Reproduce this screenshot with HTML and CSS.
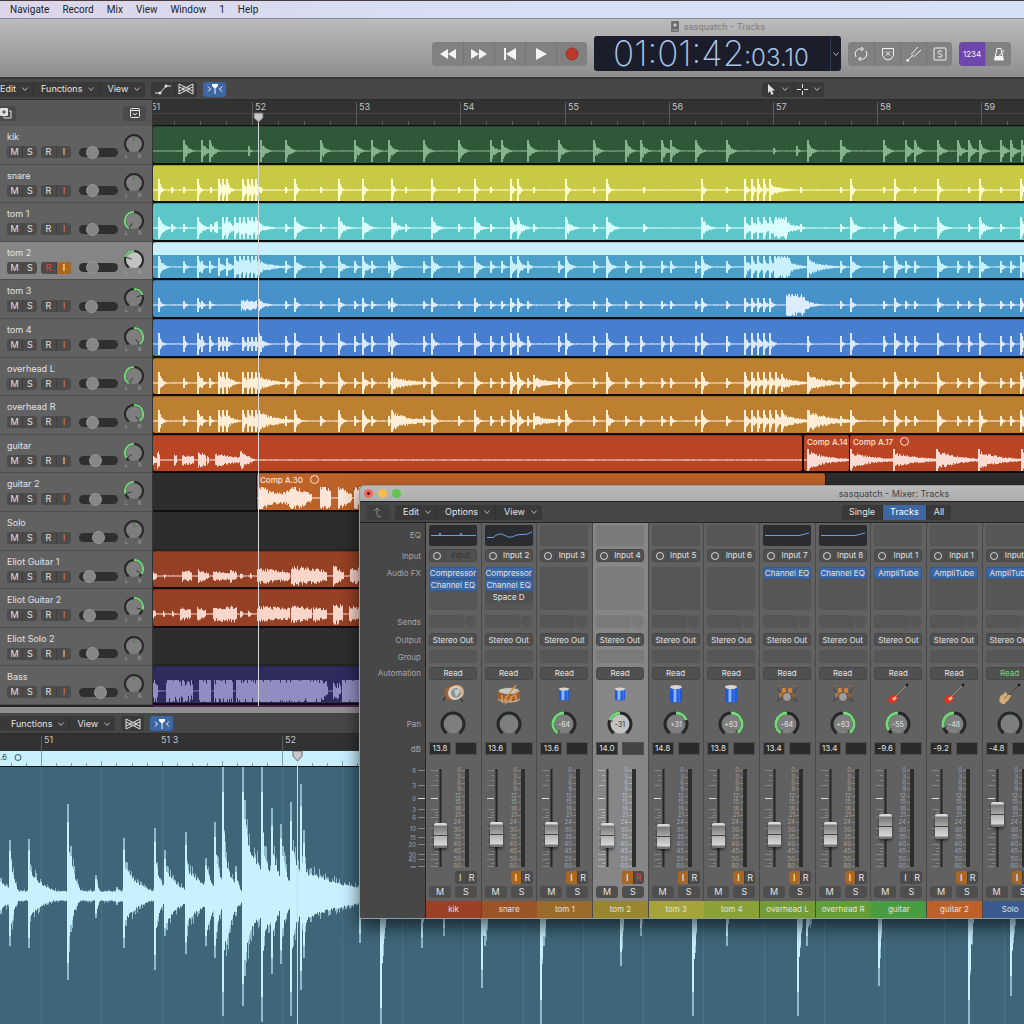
FILE: index.html
```html
<!DOCTYPE html>
<html lang="en">
  <head>
    <meta charset="UTF-8" />
    <meta name="viewport" content="width=device-width, initial-scale=1">
    <title>sasquatch - Tracks</title>
    <link rel="stylesheet" href="styles.css">
  </head>
  <body>
    <svg class="symbols" aria-hidden="true">
      <symbol id="chevron" viewBox="0 0 8 6"><path d="M1.5 1.5 4 4.5 6.500 1.500" /></symbol>
      <symbol id="automation" viewBox="0 0 18 12"><path d="M1 10h5l6-7h5" /><circle class="dot" cx="6" cy="10" r="1.500" /><circle class="dot" cx="12" cy="3" r="1.500" /></symbol>
      <symbol id="flex" viewBox="0 0 18 12"><path d="M2 1v10l7-3.500L16 11V1L9 4.500zM2 4l5 2-5 2M16 4l-5 2 5 2" /><path d="M7 4v4M9 5v2M11 4v4" /></symbol>
      <symbol id="catch" viewBox="0 0 18 12"><path d="M2 3.500 4.500 6 2 8.500M16 3.500 13.500 6l2.500 2.500M9 3v8" /><path class="dot" d="M6 1h6v2l-2 2H8L6 3z" /></symbol>
      <symbol id="kick" viewBox="0 0 26 22"><path d="M6 13l-3 5M19 14l4 5" stroke="#222" /><circle cx="12" cy="10" r="7.500" fill="#a8622f" /><circle cx="17" cy="9" r="7" fill="#e0aa78" /><circle cx="15" cy="10" r="7" fill="#d2d0c8" /><circle cx="16" cy="10" r="5" fill="#8b9092" /><path d="M14 7l5-1 1 3-4 5z" fill="#c3c8c8" /></symbol>
      <symbol id="snare" viewBox="0 0 26 22"><path d="M2 8v8c2 4 20 4 22 0V8z" fill="#a85d25" /><path d="M2 16c2 4 20 4 22 0" fill="none" stroke="#c9c5bc" /><ellipse cx="13" cy="8" rx="11" ry="3.500" fill="#cbc7bf" stroke="#6b6560" /><path d="M6 12v6M10 13v6M15 13v6M20 12v6" stroke="#c9c5bc" /><path d="M6 20 20 2M9 21 22 8" stroke="#d09340" stroke-width="1.500" /></symbol>
      <symbol id="tom" viewBox="0 0 26 22"><path d="M8 6v10c1 2 9 2 10 0V6z" fill="#2059d5" /><path d="M12 7v10" stroke="#86b5ff" stroke-width="3" /><path d="M16 7v10" stroke="#4f86e8" /><ellipse cx="13" cy="6" rx="5" ry="1.500" fill="#d9d5c8" /></symbol>
      <symbol id="bigtom" viewBox="0 0 26 22"><path d="M7 4v14c1 2 11 2 12 0V4z" fill="#2059d5" /><path d="M12 5v14" stroke="#86b5ff" stroke-width="3" /><path d="M16 5v14" stroke="#4f86e8" /><ellipse cx="13" cy="4" rx="6" ry="2" fill="#d9d5c8" /></symbol>
      <symbol id="kit" viewBox="0 0 26 22"><path d="M3 19 6 10 3 4M23 19l-3-9 3-6M8 14l-3 5M18 14l3 5" fill="none" stroke="#3c3733" stroke-width=".700" /><path d="M3 4l6-2M17 2l6 2" stroke="#8b6d42" /><rect x="8" y="5" width="4" height="5" rx="1" fill="#cf8136" /><rect x="14" y="5" width="4" height="5" rx="1" fill="#cf8136" /><rect x="5" y="10" width="4" height="4" rx="1" fill="#bd7230" /><rect x="18" y="10" width="4" height="4" rx="1" fill="#8d5d35" /><circle cx="13" cy="14" r="4.500" fill="#9c9d9f" stroke="#5d4a3b" /></symbol>
      <symbol id="redguitar" viewBox="0 0 26 22"><path d="M11 13 22 2" stroke="#a98971" /><path d="M21 3l2-2" stroke="#191513" stroke-width="2" /><path d="M4 15c1-3 3-1 5-4 0 1 1 2 3 2 0 2-1 2 0 4-1 3-3 1-4 3-4 1-6-2-4-5z" fill="#d8371e" /><path d="M7 16l3-3 2 2-3 3z" fill="#f0ab8f" /></symbol>
      <symbol id="woodguitar" viewBox="0 0 26 22"><path d="M11 13 22 2" stroke="#4d3a2c" /><path d="M21 3l2-2" stroke="#191513" stroke-width="2" /><path d="M3 14c1-3 4-1 5-6 1 2 2 4 4 4 3-1 2 2 0 4-1 3-3 2-4 5-4 1-7-3-5-7z" fill="#d3ac79" /><path d="M7 16l4-4" stroke="#8d6d4c" /></symbol>
    </svg>

    <nav class="menu-bar">
      <button>Navigate</button>
      <button>Record</button>
      <button>Mix</button>
      <button>View</button>
      <button>Window</button>
      <button>1</button>
      <button>Help</button>
    </nav>

    <header class="control-bar">
      <h1 class="window-title">
        <svg width="8" height="11" viewBox="0 0 8 11"><rect width="8" height="11" rx="1" fill="#666" /><circle cx="4" cy="4" r="2" fill="#c5ced2" /><path d="M1 9h6" stroke="#aaa" /></svg>
        sasquatch - Tracks
      </h1>
      <div class="controls">
        <div class="button-group transport">
          <button aria-label="Rewind"><svg width="16" height="12" viewBox="0 0 16 12"><path class="solid" d="M8 1v10L0 6zM16 1v10L8 6z" /></svg></button>
          <button aria-label="Forward"><svg width="16" height="12" viewBox="0 0 16 12"><path class="solid" d="M0 1v10l8-5zM8 1v10l8-5z" /></svg></button>
          <button aria-label="Go to beginning"><svg width="14" height="12" viewBox="0 0 14 12"><path class="solid" d="M1 0h2v12H1zM13 0v12L3 6z" /></svg></button>
          <button aria-label="Play"><svg width="12" height="12" viewBox="0 0 12 12"><path class="solid" d="M1 0v12l11-6z" /></svg></button>
          <button aria-label="Record"><svg width="14" height="14" viewBox="0 0 14 14"><circle cx="7" cy="7" r="6" fill="#bd3a2b" stroke="#913329" /></svg></button>
        </div>
        <div class="lcd">
          <div class="lcd-time">01:01:42<span>:03.10</span></div>
          <button aria-label="Display mode"><svg class="chevron"><use href="#chevron" /></svg></button>
        </div>
        <div class="button-group modes">
          <button aria-label="Cycle"><svg width="16" height="16" viewBox="0 0 16 16"><path d="M3 11Q1 8 3 5T8 3h2M8 1l2.500 2L8 5M13 5q2 3 0 6T8 13H6M8 11l-2.500 2L8 15" /></svg></button>
          <button aria-label="Replace"><svg width="14" height="14" viewBox="0 0 14 14"><path d="M1.500 1.500h11v7L10 12q-3 2-6 0L1.500 8.500zM5 4.500l4 4M9 4.500l-4 4" /></svg></button>
          <button aria-label="Tuner"><svg width="16" height="16" viewBox="0 0 16 16"><path d="M1 15l5-5M12 1 6 7.500C5 9 7 11 8.500 10L15 4" /><circle cx="1.500" cy="14.500" r="1" /></svg></button>
          <button aria-label="Solo"><svg width="14" height="14" viewBox="0 0 14 14"><rect x="1" y="1" width="12" height="12" rx="1" /><path d="M9 5Q8.500 3.800 7 3.800 5 3.800 5 5.300 5 6.500 7 7q2 .500 2 1.700 0 1.500-2 1.500T5 9" /></svg></button>
        </div>
        <div class="button-group modes">
          <button class="count-in">1234</button>
          <button aria-label="Metronome"><svg width="12" height="14" viewBox="0 0 12 14"><path d="M4 1.500h4L10.500 13h-9zM5.500 10 11 3" /><path class="solid" d="M2.500 9h7l1 4h-9z" /></svg></button>
        </div>
      </div>
    </header>

    <main class="workspace">
      <section class="arrange">
        <div class="tool-bar">
          <div class="menus">
            <button>Edit <svg class="chevron"><use href="#chevron" /></svg></button>
            <button>Functions <svg class="chevron"><use href="#chevron" /></svg></button>
            <button>View <svg class="chevron"><use href="#chevron" /></svg></button>
          </div>
          <div class="menus icons">
            <button aria-label="Automation"><svg><use href="#automation" /></svg></button>
            <button aria-label="Flex"><svg><use href="#flex" /></svg></button>
          </div>
          <div class="menus icons">
            <button class="active" aria-label="Catch playhead"><svg><use href="#catch" /></svg></button>
          </div>
          <div class="menus tools">
            <button aria-label="Pointer tool"><svg width="9" height="11" viewBox="0 0 9 11"><path class="solid" d="M1 0v9l2-2 1.500 4 2-1L5 6.500h3z" /></svg><svg class="chevron"><use href="#chevron" /></svg></button>
            <button aria-label="Marquee tool"><svg width="11" height="11" viewBox="0 0 11 11"><path d="M5.500 0v4M5.500 7v4M0 5.500h4M7 5.500h4" /></svg><svg class="chevron"><use href="#chevron" /></svg></button>
          </div>
        </div>

        <div class="timeline">
          <div class="track-tools">
            <button aria-label="Duplicate track"><svg width="12" height="12" viewBox="0 0 12 12"><rect class="solid" x="0" y="1" width="8" height="8" rx="1" /><path class="cut" d="M4 3v4M2 5h4" /><path d="M9 4h2v7H4V9.500" /></svg></button>
            <button aria-label="Track options"><svg width="12" height="12" viewBox="0 0 12 12"><rect x="1.500" y="1.500" width="9" height="9" rx="1" /><path d="M1.500 3.500h9M4 6l2 2 2-2" /></svg></button>
          </div>
          <svg class="ruler" id="ruler"></svg>
          <div class="track-list" id="trackList"></div>
          <div class="lanes" id="lanes"></div>
        </div>
        <svg class="playhead"><path class="line" d="M5.500 8v590" /><path class="head" d="M1 1h9v5L5.500 10 1 6z" /></svg>
      </section>

      <section class="editor">
        <div class="tool-bar">
          <div class="menus">
            <button>Functions <svg class="chevron"><use href="#chevron" /></svg></button>
            <button>View <svg class="chevron"><use href="#chevron" /></svg></button>
          </div>
          <div class="menus icons">
            <button aria-label="Flex"><svg><use href="#flex" /></svg></button>
          </div>
          <div class="menus icons">
            <button class="active" aria-label="Catch playhead"><svg><use href="#catch" /></svg></button>
          </div>
        </div>
        <svg class="editor-ruler" id="editorRuler"></svg>
        <svg class="editor-wave" id="editorWave"></svg>
        <svg class="playhead"><path class="line" d="M5.500 8v270" /><path class="head" d="M1 0h9v5L5.500 10 1 5z" /></svg>
      </section>
    </main>

    <section class="mixer">
      <div class="mixer-title">
        <span class="light red"></span><span class="light yellow"></span><span class="light green"></span>
        <h2>sasquatch - Mixer: Tracks</h2>
      </div>
      <div class="mixer-bar">
        <button class="back" aria-label="Back"><svg width="10" height="11" viewBox="0 0 10 11"><path d="M1 4l3-3 3 3M4 1v6q0 3 4 3" /></svg></button>
        <div class="menus">
          <button>Edit <svg class="chevron"><use href="#chevron" /></svg></button>
          <button>Options <svg class="chevron"><use href="#chevron" /></svg></button>
          <button>View <svg class="chevron"><use href="#chevron" /></svg></button>
        </div>
        <div class="menus filter">
          <button>Single</button>
          <button class="active">Tracks</button>
          <button>All</button>
        </div>
      </div>
      <div class="strips" id="strips">
        <div class="strip labels">
          <span>EQ</span>
          <span>Input</span>
          <span class="top">Audio FX</span>
          <span>Sends</span>
          <span>Output</span>
          <span>Group</span>
          <span>Automation</span>
          <span></span>
          <span>Pan</span>
          <span>dB</span>
          <svg class="scale" id="scale"></svg>
        </div>
      </div>
    </section>

    <script src="mixer.js"></script>
  </body>
</html>
```

FILE: styles.css
```css
:root {
  --panel: #616161;
  --bar: #474747;
  --button: #393939;
  --dark: #2d2d2d;
  --text: #e2e2e2;
  --blue: #3d67a3;
  --orange: #a96721;
  --green: #73d977;
}

* {
  box-sizing: border-box;
}

body {
  margin: 0;
  height: 100vh;
  display: flex;
  flex-direction: column;
  position: relative;
  overflow: hidden;
  background: #222;
  color: var(--text);
  font: 400 9px/12px Inter, "Liberation Sans", sans-serif;
}

button {
  display: flex;
  align-items: center;
  justify-content: center;
  margin: 0;
  padding: 0;
  border: 0;
  background: none;
  color: inherit;
  font: inherit;
  white-space: nowrap;
}

svg {
  flex: none;
  fill: none;
  stroke: currentColor;
}

.solid,
.dot {
  fill: currentColor;
  stroke: none;
}

.symbols {
  position: absolute;
  width: 0;
  height: 0;
}

.chevron {
  width: 8px;
  height: 6px;
  color: #b5b5b5;
}

/* menu bar */

.menu-bar {
  flex: none;
  display: flex;
  gap: 13px;
  height: 19px;
  padding-left: 10px;
  border-top: 1px solid #4a3a3c;
  border-bottom: 1px solid #858a9c;
  background: linear-gradient(90deg, #dcd5e8, #d7def3 40%, #d5e1f6);
  color: #23232d;
  font: 400 10px/18px Roboto, "Liberation Sans", sans-serif;
}

.menu-bar button {
  height: 18px;
}

/* control bar */

.control-bar {
  flex: none;
  height: 60px;
  border-bottom: 2px solid #363636;
  background: linear-gradient(#bcbcbc, #8d8d8d);
}

.window-title {
  display: flex;
  align-items: center;
  justify-content: center;
  gap: 5px;
  height: 15px;
  margin: 0;
  padding-left: 412px;
  color: #7e7e7e;
  font-size: 9px;
  font-weight: 400;
}

.controls {
  display: flex;
  align-items: center;
  justify-content: flex-end;
  gap: 7px;
  height: 39px;
  padding-right: 13px;
  color: #f3f3f3;
}

.button-group {
  display: flex;
  height: 24px;
  border-radius: 4px;
  background: #818181;
  overflow: hidden;
}

.button-group button {
  width: 26px;
}

.button-group button + button {
  border-left: 1px solid #757575;
}

.transport button {
  width: 31px;
}

.button-group .count-in {
  background: #6f46ab;
  font-size: 8px;
}

.lcd {
  display: flex;
  width: 247px;
  height: 35px;
  border-radius: 3px;
  background: #1b1d2b;
  color: #a9c4e4;
}

.lcd-time {
  flex: 1;
  padding-left: 19px;
  font: 200 35px/35px Inter, Roboto, sans-serif;
  white-space: nowrap;
}

.lcd-time span {
  font-size: 24px;
  font-weight: 300;
}

.lcd button {
  width: 11px;
  border-left: 1px solid #30394f;
}

/* toolbars */

.workspace {
  flex: 1;
  display: flex;
  flex-direction: column;
  min-height: 0;
}

.tool-bar {
  display: flex;
  align-items: center;
  gap: 6px;
  height: 21px;
  background: var(--bar);
  border-bottom: 1px solid #2c2c2c;
}

.menus {
  display: flex;
  height: 15px;
  border-radius: 3px;
  background: var(--button);
  overflow: hidden;
}

.menus button {
  gap: 5px;
  padding: 0 4px 0 7px;
}

.menus button + button {
  border-left: 1px solid #303030;
}

.tool-bar .menus:first-child button:first-child {
  padding-left: 0;
}

.tool-bar .icons button {
  width: 23px;
  padding: 0;
}

.icons svg {
  width: 18px;
  height: 12px;
}

.menus .active {
  background: var(--blue);
  color: #fff;
}

.tools {
  margin-left: auto;
  margin-right: 200px;
}

.tools button {
  width: 31px;
  padding: 0;
}

/* arrange */

.arrange {
  flex: none;
  position: relative;
  border-bottom: 6px solid #8f8f8f;
}

.timeline {
  display: grid;
  grid-template-columns: 153px 1fr;
  grid-template-rows: 26px 581px;
}

.track-tools {
  display: flex;
  align-items: center;
  justify-content: space-between;
  padding-right: 6px;
  border-right: 1px solid #333;
  background: #575757;
}

.track-tools button {
  width: 23px;
  height: 15px;
  border-radius: 3px;
  background: #4a4a4a;
}

.track-tools button:first-child {
  width: 16px;
  justify-content: flex-start;
}

.cut {
  stroke: #444;
}

.ruler {
  width: 100%;
  height: 26px;
  background: #323232;
  border-bottom: 1px solid #111;
}

.ruler path,
.editor-ruler path {
  stroke: #5c5c5c;
}

svg text {
  fill: #c4c4c4;
  stroke: none;
}

.track-list,
.lanes {
  display: grid;
  grid-template-rows: repeat(15, 1fr) 2px;
  min-width: 0;
  overflow: hidden;
}

.track {
  display: flex;
  justify-content: space-between;
  padding: 5px 7px 0 7px;
  border-right: 1px solid #333;
  border-bottom: 1px solid #4e4e4e;
  background: var(--panel);
}

.track.selected {
  background: #858585;
}

.track-name {
  display: block;
  height: 12px;
  margin-bottom: 3px;
}

.track-controls {
  display: flex;
  align-items: center;
  gap: 4px;
}

.pair {
  display: flex;
  height: 12px;
  border-radius: 3px;
  background: #4b4b4b;
  overflow: hidden;
}

.pair button {
  width: 15px;
}

.pair button + button {
  border-left: 1px solid #404040;
}

.monitor {
  color: #d98a35;
}

.pair .on {
  background: var(--orange);
  color: #fff;
}

.armed {
  color: #e2463a;
}

.volume {
  appearance: none;
  width: 39px;
  height: 9px;
  margin: 0 0 0 4px;
  border-radius: 5px;
  background: #2e302f;
}

.volume::-webkit-slider-thumb {
  appearance: none;
  width: 13px;
  height: 13px;
  border: 1px solid #989898;
  border-radius: 50%;
  background: #868686;
}

.track .knob {
  width: 22px;
  height: 27px;
  margin-top: 2px;
}

.knob .ring {
  stroke: #282828;
}

.knob .value {
  stroke: var(--green);
}

.knob .cap {
  fill: #7e7e7e;
  stroke: none;
}

.selected .knob .cap {
  fill: #c2c2c2;
}

.knob .needle {
  stroke: #333;
}

.knob .centre {
  stroke: #3c7a3c;
}

.knob text {
  fill: #a5a5a5;
}

.lane {
  position: relative;
  overflow: hidden;
  border-bottom: 2px solid #0e0e0e;
  background: var(--dark);
}

.lane.empty {
  border-bottom-color: #242424;
}

.region {
  position: absolute;
  top: 0;
  height: 100%;
  border-radius: 2px;
  overflow: hidden;
  box-shadow: inset 0 1px rgba(0, 0, 0, 0.18), 0 0 0 1px #1a1210;
}

.region svg {
  display: block;
  width: 100%;
  height: 100%;
}

.region-name {
  position: absolute;
  left: 3px;
  top: 1px;
  color: #fbe3d6;
  font-size: 8px;
  font-weight: 500;
  white-space: nowrap;
}

.region-name::after {
  content: "";
  display: inline-block;
  width: 7px;
  height: 7px;
  margin-left: 7px;
  border: 1px solid currentColor;
  border-radius: 50%;
  vertical-align: -1px;
}

.region-name.plain::after {
  display: none;
}

.region.picked {
  background-image: linear-gradient(#c8f0fe 13px, transparent 13px);
}

.kik { background-color: #2f5838; color: #85b390; }
.snare { background-color: #c8c944; color: #feffcf; }
.tom1 { background-color: #5cc7c9; color: #d8fefe; }
.tom2 { background-color: #4aa0c8; color: #c8f0fe; }
.tom3 { background-color: #4792cb; color: #dbedfe; }
.tom4 { background-color: #477ecf; color: #dae8fe; }
.overhead { background-color: #bd7f30; color: #ffedd6; }
.guitar { background-color: #ba4524; color: #fbdcd5; }
.guitar2 { background-color: #bd6228; color: #fde6d8; }
.eliot { background-color: #964025; color: #fad5ca; }
.bass { background-color: #2e2c5d; color: #918dc0; }

.lane-end {
  background: #4a2650;
}

.playhead {
  position: absolute;
  z-index: 1;
  left: 253px;
  top: 33px;
  width: 11px;
  height: 594px;
}

.playhead .line {
  stroke: #d8d8d8;
}

.playhead .head {
  fill: #c9c9c9;
  stroke: #6c6c6c;
}

/* audio editor */

.editor {
  flex: 1;
  display: flex;
  flex-direction: column;
  position: relative;
  min-height: 0;
  background: #3e6678;
}

.editor .tool-bar {
  flex: none;
  padding-top: 1px;
}

.editor .menus:first-child button:first-child {
  padding-left: 11px;
}

.editor-ruler {
  width: 100%;
  height: 33px;
  background: linear-gradient(#323232 17px, #c8f0fe 17px, #c8f0fe 32px, #111 32px);
}

.editor-ruler .fine {
  stroke: #7aa0ae;
}

.editor-ruler .take {
  fill: #2d5667;
}

.editor-ruler circle {
  stroke: #2d5667;
}

.editor-wave {
  flex: 1;
  width: 100%;
  color: #c8f0fe;
}

.editor-wave .grid {
  stroke: #4a7285;
}

.editor-wave .peaks {
  stroke: #8fbccb;
}

.editor .playhead {
  left: 292px;
  top: 38px;
  height: 280px;
}

/* mixer window */

.mixer {
  position: absolute;
  z-index: 2;
  left: 359px;
  top: 485px;
  width: 1070px;
  border: 1px solid #9a9a9a;
  border-radius: 5px 5px 3px 3px;
  background: var(--bar);
  box-shadow: 0 8px 18px rgba(0, 0, 0, 0.6);
  overflow: hidden;
}

.mixer-title {
  display: flex;
  align-items: center;
  gap: 5px;
  height: 15px;
  padding-left: 4px;
  background: linear-gradient(#bababa, #acacac);
}

.mixer-title h2 {
  flex: 1;
  margin: 0;
  padding-right: 46px;
  text-align: center;
  color: #454545;
  font-size: 9px;
  font-weight: 400;
}

.light {
  width: 9px;
  height: 9px;
  border-radius: 50%;
}

.red { background: radial-gradient(#601010 1px, #ed6a5f 2px); }
.yellow { background: #f5bf4f; }
.green { background: #5fc454; }

.mixer-bar {
  display: flex;
  align-items: center;
  height: 22px;
  padding-left: 6px;
  border-top: 1px solid #222;
  border-bottom: 1px solid #222;
}

.mixer-bar .back {
  width: 24px;
  height: 15px;
  margin-right: 5px;
  border-radius: 3px;
  background: #3f3f3f;
  color: #8c8c8c;
}

.mixer-bar .menus button {
  padding-left: 8px;
}

.mixer-bar .filter {
  margin-left: 300px;
}

.mixer-bar .filter button {
  padding: 0 7px;
}

.strips {
  display: grid;
  grid-template-columns: 66px repeat(18, 1fr);
  font-size: 8px;
}

.strip {
  display: grid;
  grid-template-rows: 22px 13px 46px 15px 15px 13px 14px 22px 31px 13px 110px 27px 17px;
  gap: 3px;
  align-items: center;
  min-width: 0;
  padding: 1px 4px 0 3px;
  border-right: 1px solid #4a4a4a;
  background: var(--panel);
}

.strip.selected {
  background: #868686;
}

.strip.labels {
  justify-items: end;
  padding-right: 4px;
  background: var(--bar);
  border-right-color: #252525;
  color: #a8a8a8;
}

.labels .top {
  align-self: start;
  padding-top: 2px;
}

.labels .scale {
  width: 34px;
  height: 110px;
  margin-right: -4px;
}

.scale text,
.fader text {
  fill: #a2a2a2;
  font-size: 6px;
  text-anchor: end;
}

.eq,
.slot {
  height: 13px;
  border-radius: 2px;
  background: #565656;
}

.selected .slot,
.selected .eq {
  background: #7a7a7a;
}

.eq {
  height: 21px;
}

.eq.used {
  background: #2b2d30;
  color: #6d9fe2;
}

.eq svg {
  display: block;
  width: 100%;
  height: 100%;
}

.input,
.box {
  display: flex;
  align-items: center;
  width: 100%;
  height: 13px;
  border: 1px solid #474747;
  border-radius: 3px;
  background: #505050;
}

.input::before {
  content: "";
  flex: none;
  width: 6px;
  height: 6px;
  margin: 0 3px;
  border: 1px solid #d5d5d5;
  border-radius: 50%;
}

.input span {
  flex: 1;
  height: 11px;
  border-left: 1px solid #444;
  line-height: 11px;
}

.input.off span {
  color: #303030;
}

.fx {
  align-self: start;
  height: 43px;
  margin-top: 2px;
  border-radius: 3px;
  background: #565656;
}

.selected .fx {
  background: #7c7c7c;
}

.fx button {
  width: 100%;
  height: 12px;
  border-radius: 3px;
  background: #505050;
}

.fx .loaded {
  background: var(--blue);
  box-shadow: inset 0 0 0 1px #345a92;
}

.sends {
  display: flex;
  justify-content: space-between;
}

.sends span {
  width: 35px;
}

.sends .send {
  width: 13px;
  border-radius: 50%;
}

.written {
  color: var(--green);
}

.strip .icon {
  width: 26px;
  height: 22px;
  justify-self: center;
  stroke: none;
}

.strip .knob {
  width: 26px;
  height: 26px;
  justify-self: center;
}

.strip .knob text {
  fill: #e5e5e5;
  font-size: 7px;
  text-anchor: middle;
}

.strip.selected .knob text {
  fill: #333;
}

.levels {
  display: flex;
  gap: 4px;
}

.levels span {
  flex: 1;
  width: 22px;
  height: 13px;
  border: 1px solid #505050;
  background: #2b2b2b;
  text-align: center;
  line-height: 11px;
}

.selected .levels span:last-child {
  background: #444;
}

.fader {
  display: grid;
}

.fader svg,
.fader input {
  grid-area: 1 / 1;
}

.fader svg {
  width: 100%;
  height: 110px;
}

.tick { stroke: #858585; }
.unity { stroke: #dcdcdc; }
.rail { stroke: #262626; stroke-width: 2; }
.meter { stroke: #2c2f2c; stroke-width: 4; }

.selected .tick { stroke: #b0b0b0; }
.selected .fader text { fill: #bebebe; }

.fader input {
  appearance: none;
  writing-mode: vertical-lr;
  direction: rtl;
  width: 13px;
  height: 98px;
  margin: 11px 0 0 5px;
  background: none;
}

.fader input::-webkit-slider-thumb {
  appearance: none;
  width: 13px;
  height: 25px;
  border-radius: 2px;
  background: linear-gradient(#dadada 2px, #777 3px, #a8a8a8 12px, #444 12px, #444 13px, #b0b0b0 13px, #d8d8d8 22px, #777 23px);
  box-shadow: 0 2px 3px rgba(0, 0, 0, 0.5);
}

.strip-buttons {
  display: grid;
  grid-template-columns: 1fr 1fr;
  grid-template-rows: 13px 12px;
  gap: 2px 4px;
  font-size: 9px;
}

.strip-buttons .pair {
  grid-column: 2;
  height: 13px;
}

.strip-buttons .pair button {
  flex: 1;
  width: auto;
}

.strip-buttons > button {
  border-radius: 3px;
  background: #4e4e4e;
}

.strip-name {
  align-self: stretch;
  margin: 0 -4px 0 -3px;
  line-height: 17px;
  text-align: center;
  white-space: nowrap;
}
```

FILE: mixer.js
```js
const laneStart = 153;
const $ = document.getElementById.bind(document);

// small repeatable noise source so the waveforms never change between loads
function noise(seed) {
  let s = seed;
  return () => {
    s = (s * 1664525 + 1013904223) % 4294967296;
    return s / 4294967296;
  };
}

// hits are [x, level, decay]; blocks are [from, to, level, end level]
function drawWave(from, to, shapes, seed, mid = 25, max = 11, floor = 0.6, rough = 0.45) {
  const rand = noise(seed);
  let d = "";
  for (let x = from; x < to; x++) {
    let level = floor;
    let attack = false;
    for (const s of shapes) {
      if (s.length === 3 && x >= s[0]) {
        // the strike itself is two pixels wide, the tail starts well below it
        const fresh = x - s[0] < 2;
        const hit = fresh ? s[1] : s[1] * 0.75 * Math.exp(-(x - s[0] - 1) / s[2]);
        if (hit > level) {
          level = hit;
          attack = fresh;
        }
      }
      if (s.length === 4 && x >= s[0] && x < s[1]) {
        const block = 1.25 * (s[2] + ((s[3] - s[2]) * (x - s[0])) / (s[1] - s[0]));
        if (block > level) {
          level = block;
          attack = false;
        }
      }
    }
    const up = Math.min(max, level * (1 - (attack ? 0 : rough * rand())));
    const down = Math.min(max, level * (1 - (attack ? 0 : rough * rand())));
    d += `M${x - from + 0.5} ${(mid - up).toFixed(1)}V${(mid + down).toFixed(1)}`;
  }
  return d;
}

const hits = (xs, level, decay) => xs.map((x) => [x, level, decay]);

const kickAt = [183, 201, 209, 260, 285, 320, 354, 371, 388, 423, 458, 490, 501, 527, 558, 593, 625, 640, 661, 670, 695, 726, 807, 840, 883, 905, 914, 937, 957, 968, 979, 1000, 1010, 1021];
const snareAt = [158, 197, 294, 338, 362, 391, 431, 474, 510, 517, 565, 606, 701, 744, 751, 757, 763, 769, 850, 894, 937, 979, 1020];
const rollAt = [218, 222, 226, 242, 247, 251, 255];
const softAt = [171, 183, 210, 260, 285, 320, 405, 458, 490, 533, 593, 643, 726, 800, 840, 883, 914, 968, 1000];

const snareWave = [...hits(snareAt, 14, 2), ...hits(rollAt, 13, 3), ...hits(softAt, 3, 2), [769, 8, 12]];
const tomWave = [...hits(snareAt, 14, 5), ...hits(softAt, 4, 3), ...hits([222, 226, 234, 239, 243, 247, 251, 255], 13, 6), [214, 218, 5, 7], [258, 6, 10], [774, 785, 11, 11], [785, 11, 9]];
const tom2Wave = [...hits(snareAt, 14, 4), ...hits(kickAt, 6, 3), ...hits([218, 226], 9, 5), ...hits([234, 239, 243, 247, 251, 255], 14, 8), [258, 8, 16], [774, 788, 12, 11], [788, 9, 9], [807, 12, 14]];
const tom3Wave = [...hits(snareAt, 7, 3), ...hits(kickAt, 4, 3), [241, 257, 5, 4], [258, 6, 8], [786, 803, 11, 9], [803, 8, 9]];
const tom4Wave = [...hits(snareAt, 11, 3), ...hits(kickAt, 8, 2), ...hits(rollAt, 7, 3), [258, 12, 5]];
const overWave = [...hits(snareAt, 14, 3), ...hits(kickAt, 5, 3), ...hits(rollAt, 11, 6), [258, 10, 14], [391, 11, 18], [533, 8, 18], [775, 11, 8], [781, 9, 16], [807, 13, 18]];
const overWave2 = [...overWave, [258, 14, 18], [391, 13, 20], [781, 11, 16], [807, 15, 22]];

const guitarWave = [[153, 157, 4, 2], [157, 160, 9, 4], [174, 177, 6, 3], [182, 194, 5, 3], [198, 206, 7, 5], [207, 209, 4, 3], [215, 232, 6, 3], [230, 240, 3, 3], [240, 244, 8, 6], [242, 256, 6, 0], [258, 804, 0, 0]];
const guitarWave2 = [[807, 14, 20], [850, 12, 24], [893, 11, 26], [936, 14, 22], [978, 13, 22], [1021, 13, 20]];
const comp30 = [[259, 268, 11, 8], [268, 284, 6, 5], [284, 296, 5, 12], [296, 312, 10, 3], [320, 331, 12, 9], [338, 352, 11, 3], [354, 360, 11, 9]];
const eliot1 = [[153, 157, 4, 2], [164, 166, 2, 1], [182, 192, 5, 4], [198, 209, 6, 2], [213, 230, 5, 3], [230, 237, 6, 3], [240, 243, 3, 1], [250, 252, 3, 1], [257, 290, 7, 4], [291, 327, 9, 5], [333, 344, 10, 3], [350, 359, 7, 7]];
const eliot2 = [[153, 156, 4, 2], [163, 165, 3, 1], [172, 174, 3, 1], [180, 191, 6, 4], [197, 206, 7, 3], [213, 237, 6, 7], [240, 243, 4, 1], [248, 251, 3, 1], [257, 290, 7, 5], [291, 312, 8, 5], [313, 327, 7, 4], [333, 343, 10, 7], [349, 359, 7, 6]];
const bassWave = [[153, 158, 14, 12], [166, 193, 16, 10], [199, 211, 18, 18], [214, 233, 16, 14], [236, 257, 18, 16], [257, 322, 24, 17], [322, 328, 12, 6], [333, 341, 7, 7], [342, 359, 22, 22]];

const full = (wave) => [{ from: 153, to: 1600, wave }];

// volume is the slider position, pan runs from -64 to +63
const tracks = [
  { name: "kik", kind: "kik", volume: 7, pan: 0, input: "", regions: full([...hits(kickAt, 14, 4), [248, 5, 2], [773, 3, 2], [796, 5, 2]]) },
  { name: "snare", kind: "snare", volume: 7, pan: 0, input: "monitor", regions: full(snareWave) },
  { name: "tom 1", kind: "tom1", volume: 7, pan: -64, input: "monitor", regions: full(tomWave) },
  { name: "tom 2", kind: "tom2 picked", volume: 7, pan: -31, input: "on", selected: true, regions: full(tom2Wave) },
  { name: "tom 3", kind: "tom3", volume: 6, pan: 31, input: "monitor", regions: full(tom3Wave) },
  { name: "tom 4", kind: "tom4", volume: 7, pan: 63, input: "monitor", regions: full(tom4Wave) },
  { name: "overhead L", kind: "overhead", volume: 7, pan: -64, input: "monitor", regions: full(overWave) },
  { name: "overhead R", kind: "overhead", volume: 7, pan: 63, input: "monitor", regions: full(overWave2) },
  { name: "guitar", kind: "guitar", volume: 10, pan: -55, input: "", regions: [
    { from: 153, to: 802, wave: guitarWave },
    { from: 804, to: 849, wave: guitarWave2, label: "Comp A.14", plain: true },
    { from: 850, to: 1600, wave: guitarWave2, label: "Comp A.17" },
  ] },
  { name: "guitar 2", kind: "guitar2", volume: 10, pan: -48, input: "monitor", regions: [{ from: 257, to: 825, wave: comp30, label: "Comp A.30" }] },
  { name: "Solo", volume: 13, pan: 0, input: "monitor", regions: [] },
  { name: "Eliot Guitar 1", kind: "eliot", volume: 4, pan: 55, input: "monitor", regions: full(eliot1) },
  { name: "Eliot Guitar 2", kind: "eliot", volume: 4, pan: 48, input: "monitor", regions: full(eliot2) },
  { name: "Eliot Solo 2", volume: 7, pan: 0, input: "", regions: [] },
  { name: "Bass", kind: "bass", volume: 15, pan: 0, input: "monitor", regions: full(bassWave) },
];

function arc(cx, cy, r, from, to) {
  const point = (deg) => {
    const a = ((deg - 90) * Math.PI) / 180;
    return `${(cx + r * Math.cos(a)).toFixed(2)} ${(cy + r * Math.sin(a)).toFixed(2)}`;
  };
  return `M${point(from)}A${r} ${r} 0 ${to - from > 180 ? 1 : 0} 1 ${point(to)}`;
}

function knob(c, r, thick, pan, extra) {
  const deg = (pan / 64) * 145;
  const value = pan ? `<path class="value" stroke-width="${thick}" d="${arc(c, c, r, Math.min(0, deg), Math.max(0, deg))}" />` : "";
  const a = ((deg - 90) * Math.PI) / 180;
  const [dx, dy] = [Math.cos(a), Math.sin(a)];
  const start = r * (thick > 2 ? 0.7 : 0.3);
  return `<svg class="knob">
    <circle class="cap" cx="${c}" cy="${c}" r="${r - thick / 2}" />
    <path class="ring" stroke-width="${thick}" d="${arc(c, c, r, -145, 145)}" />${value}
    <path class="${pan ? "needle" : "centre"}" d="M${c + dx * start} ${c + dy * start}L${c + dx * (r - 1)} ${c + dy * (r - 1)}" />
    ${extra}</svg>`;
}

$("trackList").innerHTML = tracks.map((t) => `
  <div class="track ${t.selected ? "selected" : ""}">
    <div>
      <label class="track-name" for="vol-${t.name}">${t.name}</label>
      <div class="track-controls">
        <div class="pair"><button>M</button><button>S</button></div>
        <div class="pair"><button class="${t.selected ? "armed" : ""}">R</button><button class="${t.input}">I</button></div>
        <input class="volume" id="vol-${t.name}" type="range" min="0" max="26" value="${t.volume}">
      </div>
    </div>
    ${knob(11, 9, 2, t.pan, '<text x="2" y="25" font-size="5">L</text><text x="15" y="25" font-size="5">R</text>')}
  </div>`).join("");

$("lanes").innerHTML = tracks.map((t, i) => {
  const regions = t.regions.map((r) => `
    <div class="region ${t.kind}" style="left: ${r.from - laneStart}px; width: ${r.to - r.from}px">
      <svg><path d="${drawWave(r.from, r.to, r.wave, i * 97 + 5, 25, 11, 0.7, t.kind === "bass" ? 0.7 : 0.45)}" /></svg>
      ${r.label ? `<span class="region-name ${r.plain ? "plain" : ""}">${r.label}</span>` : ""}
    </div>`).join("");
  return `<div class="lane ${regions ? "" : "empty"}">${regions}</div>`;
}).join("") + '<div class="lane-end"></div>';

// bar ruler, four beats to a bar
let bars = "";
for (let bar = 51; laneStart + 99 + (bar - 52) * 104.2 < window.innerWidth; bar++) {
  const x = Math.round(99 + (bar - 52) * 104.2);
  bars += `<path d="M${x + 0.5} 2V26M${x + 26.5} 21V26M${x + 52.5} 21V26M${x + 78.5} 21V26" />`;
  bars += `<text x="${bar === 51 ? -2 : x + 3}" y="10">${bar}</text>`;
}
$("ruler").innerHTML = `${bars}<path d="M0 13.500H1500" opacity=".4" />`;

// audio editor
let fine = "";
let grid = "";
for (let i = 0; i < 100; i++) {
  const x = Math.round(-19 + i * 15.05) + 0.5;
  fine += `M${x} ${i % 4 ? 29 : 27}V32`;
  if (i % 4 === 0) grid += `M${x} 0V600`;
}
$("editorRuler").innerHTML = `
  <path d="M41.500 2V17M282.500 2V17" />
  <path class="fine" d="${fine}M41.500 17V32M282.500 17V32" />
  <text x="44" y="9">51</text><text x="161" y="9">51 3</text><text x="285" y="9">52</text>
  <text class="take" x="0" y="26" font-size="8">.6</text><circle cx="18" cy="23.500" r="3" />`;

// x, level above, level below, decay
const peaks = [
  [0, 18, 18, 12], [9, 56, 50, 4], [28, 57, 52, 1], [29, 32, 26, 16], [67, 92, 84, 2], [70, 50, 36, 5], [95, 21, 22, 3], [116, 9, 9, 8],
  [123, 58, 52, 1], [125, 34, 30, 16], [154, 68, 74, 2], [156, 34, 30, 6], [164, 46, 40, 2], [166, 30, 34, 14], [185, 64, 58, 2], [187, 32, 30, 22],
  [205, 38, 50, 7], [214, 74, 62, 3], [216, 40, 36, 6], [222, 130, 120, 2], [225, 44, 60, 8], [235, 30, 20, 3], [242, 130, 110, 2], [244, 96, 80, 8], [248, 62, 46, 22],
  [261, 130, 126, 2], [263, 50, 50, 14], [271, 88, 78, 2], [273, 50, 40, 8], [280, 72, 68, 2], [282, 50, 40, 6], [290, 94, 120, 2], [292, 56, 50, 10],
  [300, 112, 94, 1], [303, 66, 62, 2], [304, 34, 36, 14], [310, 28, 26, 50],
  [359, 30, 47, 2], [380, 90, 140, 2], [382, 50, 60, 4], [421, 30, 52, 3], [443, 30, 40, 4], [481, 50, 92, 2], [484, 40, 50, 5], [540, 90, 130, 2], [543, 50, 50, 4], [620, 50, 70, 3],
  [640, 90, 40, 3], [692, 60, 120, 3], [726, 60, 50, 3], [797, 70, 120, 3], [806, 60, 50, 6], [878, 70, 90, 3], [968, 70, 130, 3], [1010, 70, 100, 3],
];
const rand = noise(42);
let outer = "";
let inner = "";
for (let x = 0; x < 1500; x++) {
  let up = 6;
  let down = 6;
  let attack = false;
  for (const [at, a, b, decay] of peaks) {
    if (x < at) continue;
    const fall = Math.exp(-Math.max(0, x - at - 1) / decay);
    if (x - at < 2 && a >= up) attack = true;
    up = Math.max(up, a * fall);
    down = Math.max(down, b * fall);
  }
  const j = attack ? 1 : 0.7 + 0.45 * rand() ** 2;
  const k = attack ? 1 : 0.7 + 0.45 * rand() ** 2;
  outer += `M${x + 0.5} ${(129 - up * j).toFixed(1)}V${(129 + down * k).toFixed(1)}`;
  inner += `M${x + 0.5} ${(129 - up * Math.min(j, 0.8)).toFixed(1)}V${(129 + down * Math.min(k, 0.8)).toFixed(1)}`;
}
$("editorWave").innerHTML = `<path class="grid" d="${grid}" /><path class="peaks" d="${outer}" /><path d="${inner}" />`;

// mixer channel strips
const flatEq = "M2 10.500H47";
const shelfEq = "M2 10.500H36L46 8";
const strips = [
  { name: "kik", input: "Input", off: true, eq: `${flatEq}M10 10l1-2 1 2M31 10l1-2 1 2`, fx: ["Compressor", "Channel EQ"], icon: "kick", pan: 0, db: "13.8", fader: 19, color: "#9b3f26" },
  { name: "snare", input: "Input 2", eq: "M2 12.500H8Q14 7 19 10T27 12Q32 9 37 9.500T47 7", fx: ["Compressor", "Channel EQ", "Space D"], icon: "snare", pan: 0, db: "13.6", fader: 20, monitor: true, color: "#9b5427" },
  { name: "tom 1", input: "Input 3", fx: [], icon: "tom", pan: -64, db: "13.6", fader: 20, monitor: true, color: "#9a6b2b" },
  { name: "tom 2", input: "Input 4", fx: [], icon: "tom", pan: -31, db: "14.0", fader: 19, monitor: true, selected: true, color: "#9b8630" },
  { name: "tom 3", input: "Input 5", fx: [], icon: "bigtom", pan: 31, db: "14.8", fader: 18, monitor: true, color: "#a4a439" },
  { name: "tom 4", input: "Input 6", fx: [], icon: "bigtom", pan: 63, db: "13.8", fader: 19, monitor: true, color: "#8aa137" },
  { name: "overhead L", input: "Input 7", eq: shelfEq, fx: ["Channel EQ"], icon: "kit", pan: -64, db: "13.4", fader: 20, monitor: true, color: "#749d36" },
  { name: "overhead R", input: "Input 8", eq: shelfEq, fx: ["Channel EQ"], icon: "kit", pan: 63, db: "13.4", fader: 20, monitor: true, color: "#629d38" },
  { name: "guitar", input: "Input 1", fx: ["AmpliTube"], icon: "redguitar", pan: -55, db: "-9.6", fader: 28, color: "#489d43" },
  { name: "guitar 2", input: "Input 1", fx: ["AmpliTube"], icon: "redguitar", pan: -48, db: "-9.2", fader: 28, monitor: true, color: "#bd6029" },
  { name: "Solo", input: "Input 1", fx: ["AmpliTube"], icon: "woodguitar", pan: 0, db: "-4.8", fader: 40, monitor: true, written: true, color: "#3b5b8e" },
];

const faderMarks = [["6", 12.5], ["3", 27.5], ["0", 40.5], ["3", 51.5], ["6", 59.5], ["10", 70.5], ["15", 79.5], ["20", 86.5], ["30", 96.5], ["40", 101.5], ["∞", 108.5]];
const meterMarks = [["0", 12], ["3", 19], ["6", 25], ["9", 31], ["12", 38], ["15", 44], ["18", 51], ["21", 57], ["24", 64], ["30", 72], ["35", 79], ["40", 86], ["45", 93], ["50", 101], ["60", 108]];

$("scale").innerHTML = faderMarks.map(([n, y]) => `<text x="25" y="${y + 2}">${n}</text><path class="${n === "0" ? "unity" : "tick"}" d="M27 ${y}H34" />`).join("");

const ticks = faderMarks.map(([n, y]) => `<path class="${n === "0" ? "unity" : "tick"}" d="M2 ${y}H9" />`).join("");
const small = '<path class="tick" d="M6 17.500H9M6 22.500H9M6 54.500H9M6 57.500H9M6 63.500H9M6 67.500H9M6 75.500H9M6 90.500H9M6 93.500H9M6 105.500H9" />';
const numbers = meterMarks.map(([n, y]) => `<text x="32" y="${y + 2}">${n}</text><path class="tick" d="M33 ${y + 0.5}H36" />`).join("");

$("strips").insertAdjacentHTML("beforeend", strips.map((s) => `
  <div class="strip ${s.selected ? "selected" : ""}">
    <div class="eq ${s.eq ? "used" : ""}">${s.eq ? `<svg><path d="${s.eq}" /></svg>` : ""}</div>
    <button class="input ${s.off ? "off" : ""}"><span>${s.input}</span></button>
    <div class="fx">${s.fx.map((f) => `<button class="${f === "Space D" ? "" : "loaded"}">${f}</button>`).join("")}</div>
    <div class="sends"><span class="slot"></span><span class="slot send"></span></div>
    <button class="box">Stereo Out</button>
    <div class="slot"></div>
    <button class="box ${s.written ? "written" : ""}">Read</button>
    <svg class="icon"><use href="#${s.icon}" /></svg>
    ${knob(13, 11, 3, s.pan, s.pan ? `<text x="13" y="15.500">${s.pan > 0 ? "+" : ""}${s.pan}</text>` : "")}
    <div class="levels"><span>${s.db}</span><span></span></div>
    <div class="fader">
      <svg>${ticks}${small}${numbers}<path class="rail" d="M11.500 11V109" /><path class="meter" d="M38 11V109" /></svg>
      <input type="range" min="0" max="73" value="${s.fader}" aria-label="${s.name} level">
    </div>
    <div class="strip-buttons">
      <div class="pair"><button class="${s.monitor ? "on" : ""}">I</button><button class="${s.selected ? "armed" : ""}">R</button></div>
      <button>M</button><button>S</button>
    </div>
    <div class="strip-name" style="background: ${s.color}">${s.name}</div>
  </div>`).join(""));
```
